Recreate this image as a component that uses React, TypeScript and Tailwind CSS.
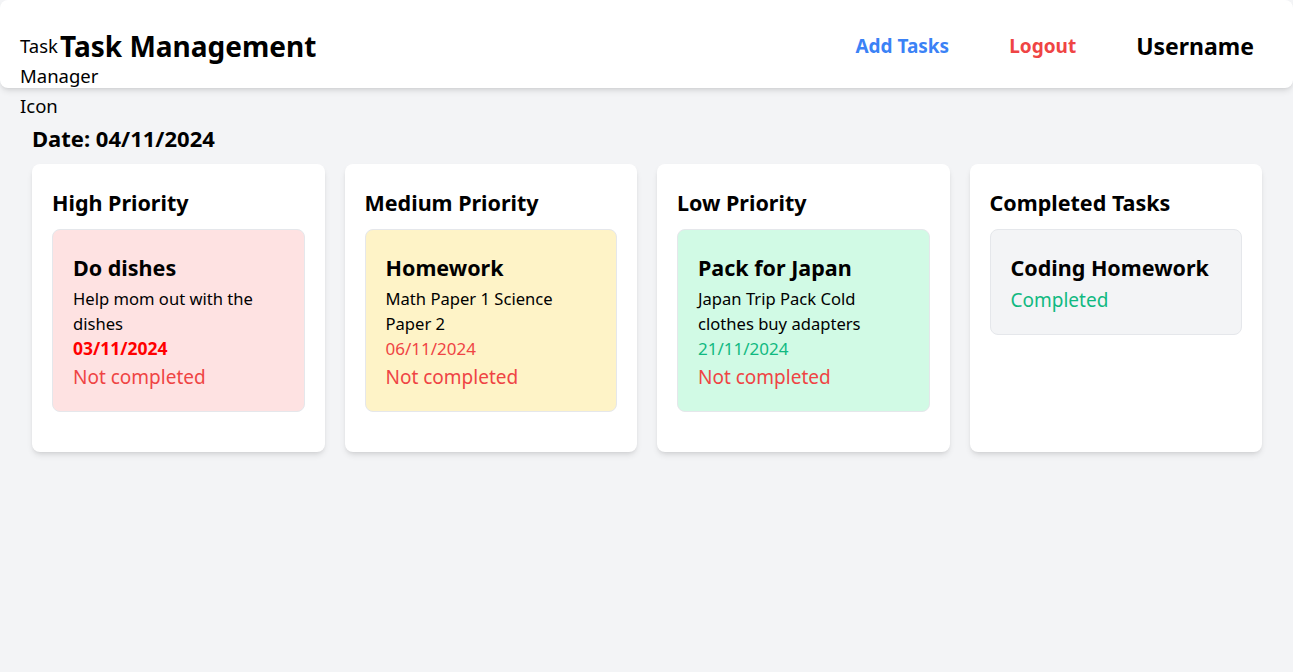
const columns = [
  {
    title: 'High Priority',
    tasks: [
      {
        name: 'Do dishes',
        description: 'Help mom out with the dishes',
        date: '03/11/2024',
        box: 'bg-[#fee2e2]',
        dateClass: 'font-bold text-[17.5px] text-[#ff0000]',
      },
    ],
  },
  {
    title: 'Medium Priority',
    tasks: [
      {
        name: 'Homework',
        description: 'Math Paper 1 Science Paper 2',
        date: '06/11/2024',
        box: 'bg-[#fef3c7]',
        dateClass: 'text-[17px] text-[#ef4444]',
      },
    ],
  },
  {
    title: 'Low Priority',
    tasks: [
      {
        name: 'Pack for Japan',
        description: 'Japan Trip Pack Cold clothes buy adapters',
        date: '21/11/2024',
        box: 'bg-[#d1fae5]',
        dateClass: 'text-[17px] text-[#10b981]',
      },
    ],
  },
];

type Task = (typeof columns)[number]['tasks'][number];

function TaskCard({ task }: { task: Task }) {
  return (
    <div className={`rounded-lg border border-[#e5e7eb] p-5 ${task.box}`}>
      <h3 className="text-[21.5px] font-bold leading-9">{task.name}</h3>
      <p className="text-[16.6px] leading-[25px]">{task.description}</p>
      <p className={`leading-[25px] ${task.dateClass}`}>{task.date}</p>
      <p className="mt-0.5 text-[19px] leading-7 text-[#ef4444]">Not completed</p>
    </div>
  );
}

export default function App() {
  return (
    <div className="min-h-screen bg-[#f3f4f6] text-black" style={{ fontFamily: '"Noto Sans", sans-serif' }}>
      <header className="flex h-[88px] items-center rounded-lg bg-white pt-1 pl-5 pr-[39px] shadow-md">
        {/* broken logo image: only its alt text shows */}
        <div className="mt-[27px] w-10 self-start text-[18.5px] leading-[30px]">Task Manager Icon</div>
        <h1 className="text-[28px] font-bold leading-[30px]">Task Management</h1>
        <nav className="ml-auto flex items-center gap-[60px]">
          <a className="text-[19px] font-bold text-[#3b82f6]">Add Tasks</a>
          <a className="text-[19px] font-bold text-[#ef4444]">Logout</a>
          <span className="text-[23px] font-bold">Username</span>
        </nav>
      </header>

      <main className="pl-8 pr-[31px] pt-9">
        <h2 className="mb-3 text-[22px] font-bold leading-7">Date: 04/11/2024</h2>
        <div className="grid grid-cols-4 gap-5">
          {columns.map((col) => (
            <div key={col.title} className="rounded-lg bg-white px-5 pt-6 pb-10 shadow-md">
              <h2 className="mb-[11px] text-[21.5px] font-bold leading-[30px]">{col.title}</h2>
              <div className="flex flex-col gap-3">
                {col.tasks.map((t) => (
                  <TaskCard key={t.name} task={t} />
                ))}
              </div>
            </div>
          ))}
          <div className="rounded-lg bg-white px-5 pt-6 pb-10 shadow-md">
            <h2 className="mb-[11px] text-[21.5px] font-bold leading-[30px]">Completed Tasks</h2>
            <div className="rounded-lg border border-[#e5e7eb] bg-[#f3f4f6] p-5">
              <h3 className="text-[21.5px] font-bold leading-9">Coding Homework</h3>
              <p className="text-[19px] leading-7 text-[#10b981]">Completed</p>
            </div>
          </div>
        </div>
      </main>
    </div>
  );
}
